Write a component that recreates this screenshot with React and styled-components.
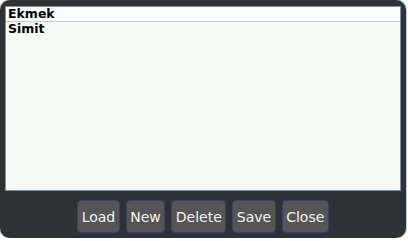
import React from "react";
import styled, { createGlobalStyle } from "styled-components";

const GlobalStyle = createGlobalStyle`
  html, body {
    margin: 0;
    padding: 0;
    background: #ffffff;
  }
`;

const items = ["Ekmek", "Simit"];
const buttons = ["Load", "New", "Delete", "Save", "Close"];

const App = () => {
  return (
    <>
      <GlobalStyle />
      <Panel>
        <List>
          {items.map((item, i) => (
            <Row key={item} selected={i === 0}>
              {item}
            </Row>
          ))}
        </List>
        <ButtonBar>
          {buttons.map((b) => (
            <Button key={b}>{b}</Button>
          ))}
        </ButtonBar>
      </Panel>
    </>
  );
};

const Panel = styled.div`
  box-sizing: border-box;
  width: 406px;
  height: 238px;
  background: #2e3135;
  border-radius: 10px;
  box-shadow: 0 0 0 1px #c8cbcc;
  padding: 6px 5px 5px 5px;
  display: flex;
  flex-direction: column;
`;

const List = styled.div`
  box-sizing: border-box;
  height: 185px;
  background: #f6fbf8;
  border: 1px solid #7d90a4;
  display: flex;
  flex-direction: column;
`;

const Row = styled.div`
  box-sizing: border-box;
  height: 15px;
  padding-left: 2px;
  font-family: "DejaVu Sans", sans-serif;
  font-weight: bold;
  font-size: 12.5px;
  line-height: 14px;
  color: #000000;
  background: ${(p) => (p.selected ? "#fbfdfc" : "transparent")};
  border-bottom: 1px solid ${(p) => (p.selected ? "#c7cac8" : "transparent")};
`;

const ButtonBar = styled.div`
  display: flex;
  justify-content: center;
  gap: 6px;
  margin-top: 9px;
`;

const Button = styled.button`
  box-sizing: border-box;
  height: 33px;
  padding: 0 3.5px;
  background: #555555;
  border: 1px solid #3e3c70;
  border-radius: 4px;
  color: #f2f2f2;
  font-family: "DejaVu Sans", sans-serif;
  font-size: 14px;
`;

export default App;
